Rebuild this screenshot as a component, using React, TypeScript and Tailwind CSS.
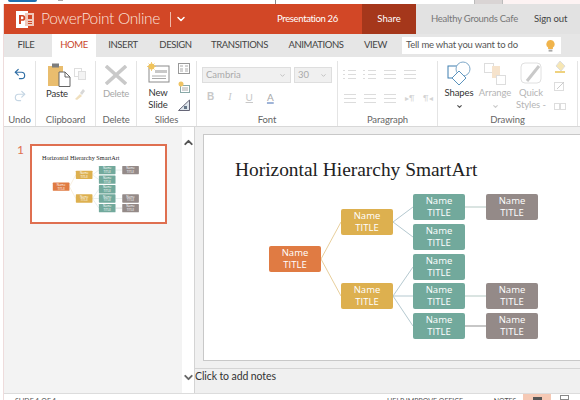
import { ChevronDown, ChevronUp, Redo2, Undo2 } from "lucide-react";

const nodes = [
  { x: 65, y: 111, c: "bg-[#e07b43]" },
  { x: 137, y: 74, c: "bg-[#ddb04f]" },
  { x: 137, y: 148, c: "bg-[#ddb04f]" },
  { x: 209, y: 59, c: "bg-[#72a99c]" },
  { x: 209, y: 89, c: "bg-[#72a99c]" },
  { x: 209, y: 119, c: "bg-[#72a99c]" },
  { x: 209, y: 148, c: "bg-[#72a99c]" },
  { x: 209, y: 178, c: "bg-[#72a99c]" },
  { x: 282, y: 59, c: "bg-[#948a88]" },
  { x: 282, y: 148, c: "bg-[#948a88]" },
  { x: 282, y: 178, c: "bg-[#948a88]" },
];

const lines = [
  [117, 124, 137, 87, "#e8cf9c"],
  [117, 124, 137, 161, "#e8cf9c"],
  [189, 87, 209, 72, "#b5c9d0"],
  [189, 87, 209, 102, "#b5c9d0"],
  [189, 161, 209, 132, "#b5c9d0"],
  [189, 161, 209, 161, "#b5c9d0"],
  [189, 161, 209, 191, "#b5c9d0"],
  [261, 72, 282, 72, "#b5c9c4"],
  [261, 161, 282, 161, "#b5c9c4"],
  [261, 191, 282, 191, "#8f8f8f"],
] as const;

const Slide = () => (
  <div className="relative w-[415px] h-[226px] bg-white">
    <h1 className="absolute left-[31px] top-[23px] text-[19.4px] leading-6 whitespace-nowrap text-[#222] font-['Liberation_Serif',serif]">
      Horizontal Hierarchy SmartArt
    </h1>
    <svg className="absolute inset-0" width="415" height="226">
      {lines.map(([x1, y1, x2, y2, stroke], i) => (
        <line key={i} x1={x1} y1={y1} x2={x2} y2={y2} stroke={stroke} strokeWidth="1" />
      ))}
    </svg>
    {nodes.map((n, i) => (
      <div
        key={i}
        className={`absolute w-[52px] h-[26px] rounded-[2px] flex flex-col items-center justify-center text-white text-[9.5px] leading-[12px] font-['Open_Sans',sans-serif] ${n.c}`}
        style={{ left: n.x, top: n.y }}
      >
        <span>Name</span>
        <span>TITLE</span>
      </div>
    ))}
  </div>
);

const Tab = ({ label, active, className }: { label: string; active?: boolean; className: string }) => (
  <div
    className={`h-full flex items-center justify-center text-[9.5px] tracking-[-0.4px] ${className} ${
      active ? "bg-white text-[#c8452a]" : "text-[#444]"
    }`}
  >
    {label}
  </div>
);

const Group = ({ label, className, children }: { label: string; className: string; children: React.ReactNode }) => (
  <div className={`h-full flex flex-col border-r border-[#e4e4e4] ${className}`}>
    <div className="flex-1 min-h-0">{children}</div>
    <div className="h-[13px] pt-px text-center text-[9.5px] tracking-[-0.1px] leading-[12px] text-[#666]">{label}</div>
  </div>
);

const Lines = ({ w = 14, color = "#dcdcdc", dotted }: { w?: number; color?: string; dotted?: boolean }) => (
  <svg width={w} height="11" viewBox="0 0 14 11" stroke={color} strokeWidth="1">
    {[1.5, 5.5, 9.5].map((y) => (
      <g key={y}>
        {dotted && <line x1="0" y1={y} x2="2" y2={y} />}
        <line x1={dotted ? 5 : 1} y1={y} x2="13" y2={y} />
      </g>
    ))}
  </svg>
);

const Glyph = ({ children, w = 14, h = 14 }: { children: React.ReactNode; w?: number; h?: number }) => (
  <svg width={w} height={h} viewBox={`0 0 ${w} ${h}`} fill="none">
    {children}
  </svg>
);

export default function App() {
  return (
    <div className="w-[580px] h-[400px] overflow-hidden flex flex-col bg-white font-['Lato',sans-serif]">
      {/* browser edge above the app */}
      <div className="h-1 flex items-start bg-[#fff]">
        <div className="ml-2 w-[29px] h-[2px] rounded-b bg-[#1e6fb0]" />
        <div className="ml-[21px] w-[5px] h-[1px] bg-[#aaa]" />
        <div className="ml-[212px] w-px h-1 bg-[#888]" />
        <div className="ml-[198px] w-[29px] h-1 bg-[#d9d4d4] border-x border-[#bbb]" />
        <div className="flex-1 h-1 bg-[#fdf3f3]" />
      </div>

      <div className="flex-1 min-h-0 flex flex-col ml-[3px] border-l border-[#eedcdc]">
        {/* Title bar */}
        <div className="h-[30px] flex items-center shrink-0 bg-[#e2e2e2]">
          <div className="w-[358px] h-full flex items-center bg-[#d24726] text-white">
            <svg className="ml-3" width="19" height="19" viewBox="0 0 19 19">
              <rect x="0" y="1" width="12" height="17" fill="#fff" />
              <rect x="9" y="3" width="9" height="13" fill="#f0c9bb" />
              <rect x="12" y="5" width="4" height="4" fill="#d24726" />
              <rect x="12" y="11" width="4" height="1" fill="#d24726" />
              <rect x="12" y="13" width="4" height="1" fill="#d24726" />
              <path d="M3 14V5h3.4a2.9 2.9 0 0 1 0 5.8H5V14z M5 6.6v2.6h1.2a1.3 1.3 0 0 0 0-2.6z" fill="#d24726" fillRule="evenodd" />
            </svg>
            <span className="ml-[6px] w-[120px] text-[15.5px] tracking-[-0.35px] font-light whitespace-nowrap text-[#fbe3db]">PowerPoint Online</span>
            <div className="ml-[9px] w-px h-[15px] bg-[#f0b9a8]" />
            <ChevronDown size={12} strokeWidth={3} className="ml-[4px]" />
            <span className="ml-[90px] text-[9.5px] tracking-[-0.35px] whitespace-nowrap">Presentation 26</span>
          </div>
          <div className="w-[54px] h-full flex items-center justify-center text-[9.5px] bg-[#a5371b] text-white">Share</div>
          <span className="ml-[15px] w-[87px] whitespace-nowrap text-[#777] text-[9.5px] tracking-[-0.25px]">Healthy Grounds Cafe</span>
          <span className="ml-[16px] whitespace-nowrap text-[#444] text-[9.5px] tracking-[-0.1px]">Sign out</span>
        </div>

        {/* Tabs */}
        <div className="h-[23px] shrink-0 flex items-center bg-[#e6e6e6]">
          <Tab label="FILE" className="w-[48px] pr-1" />
          <Tab label="HOME" active className="w-[44px]" />
          <Tab label="INSERT" className="w-[54px]" />
          <Tab label="DESIGN" className="w-[51px]" />
          <Tab label="TRANSITIONS" className="w-[77px]" />
          <Tab label="ANIMATIONS" className="w-[76px]" />
          <Tab label="VIEW" className="w-[43px]" />
          <div className="ml-[5px] w-[159px] h-[17px] flex items-center justify-between pl-1 pr-[6px] bg-white text-[9.5px] tracking-[-0.2px] text-[#555] whitespace-nowrap">
            Tell me what you want to do
            <svg width="9" height="12" viewBox="0 0 9 12">
              <path d="M4.5 0a4.2 4.2 0 0 1 2.4 7.6V9H2.1V7.6A4.2 4.2 0 0 1 4.5 0z" fill="#f0b44c" />
              <rect x="2.6" y="9.6" width="3.8" height="2" fill="#a8a8a8" />
            </svg>
          </div>
        </div>

        {/* Ribbon */}
        <div className="h-[70px] shrink-0 flex border-b border-[#d8d8d8] pt-1 pb-0">
          <Group label="Undo" className="w-[32px]">
            <div className="flex flex-col items-center gap-2 pt-[6px]">
              <Undo2 size={14} strokeWidth={2} className="text-[#2f6ea5]" />
              <Redo2 size={14} strokeWidth={2} className="text-[#c5d6e4]" />
            </div>
          </Group>

          <Group label="Clipboard" className="w-[60px]">
            <div className="flex pl-[11px] pt-[2px]">
              <div className="flex flex-col items-center w-[24px]">
                <svg width="23" height="24" viewBox="0 0 23 24">
                  <path d="M0 3h15v20H0z" fill="#e9bd6e" />
                  <rect x="4" y="0.5" width="7" height="4" fill="#7d7d7d" />
                  <path d="M11 9h6l5 5v9.500H11z" fill="#fff" stroke="#666" />
                  <path d="M17 9v5h5" fill="none" stroke="#666" />
                </svg>
                <span className="-ml-1 text-[9.5px] tracking-[-0.2px] leading-3 mt-[1px] text-[#333]">Paste</span>
              </div>
              <div className="ml-[2px] flex flex-col gap-[8px] pt-[5px] pl-[1px]">
                <Glyph w={12} h={12}>
                  <rect x="0.500" y="0.500" width="7" height="8" stroke="#dedede" />
                  <rect x="4.500" y="3.500" width="7" height="8" stroke="#dedede" fill="#f3f3f3" />
                </Glyph>
                <Glyph w={12} h={12}>
                  <path d="M1 11l5-5 2 2-5 4z" fill="#f0dfbd" />
                  <path d="M6 5l3-4 2 2-3 4z" fill="#d8d8d8" />
                </Glyph>
              </div>
            </div>
          </Group>

          <Group label="Delete" className="w-[41px]">
            <div className="flex flex-col items-center pt-1">
              <svg width="22" height="20" viewBox="0 0 22 20">
                <path d="M1 1l20 18M21 1L1 19" stroke="#c9c9c9" strokeWidth="3.500" />
              </svg>
              <span className="text-[9.5px] tracking-[-0.3px] leading-3 mt-[3px] text-[#a8a8a8]">Delete</span>
            </div>
          </Group>

          <Group label="Slides" className="w-[60px]">
            <div className="flex pl-[8px]">
              <div className="flex flex-col items-center w-[26px]">
                <svg className="mt-px" width="23" height="21" viewBox="0 0 23 21">
                  <rect x="2" y="4" width="20" height="16" fill="#fff" stroke="#8c8c8c" />
                  <rect x="8" y="8" width="12" height="3" fill="#c8c8c8" />
                  <path d="M5 14h14M5 16.500h14" stroke="#aaa" />
                  <circle cx="4.500" cy="4.500" r="3" fill="#f0c35a" />
                  <path d="M4.500 0v9M0 4.500h9M1.500 1.500l6 6M7.500 1.500l-6 6" stroke="#f0c35a" strokeWidth="0.800" />
                </svg>
                <span className="text-[9.5px] tracking-[-0.1px] leading-[12px] mt-1 text-[#333] text-center">New Slide</span>
              </div>
              <div className="ml-[7px] flex flex-col gap-[6px] pt-[2px]">
                <Glyph w={12} h={12}>
                  <rect x="0.500" y="0.500" width="11" height="10" stroke="#999" />
                  <path d="M2 3h3M2 6h3M2 8h3M7 3h3M7 6h3M7 8h3" stroke="#aaa" />
                </Glyph>
                <Glyph w={12} h={12}>
                  <rect x="2.500" y="4.500" width="9" height="7" stroke="#8aa9a8" />
                  <path d="M4 7h6M4 9h6" stroke="#aaa" />
                  <circle cx="3" cy="3" r="2.500" fill="#efc464" />
                </Glyph>
                <Glyph w={12} h={12}>
                  <path d="M0.500 11.500L11.500 1v10.500z" stroke="#667" fill="#dfe6ec" />
                  <rect x="6" y="7" width="3" height="3" fill="#678" />
                </Glyph>
              </div>
            </div>
          </Group>

          <Group label="Font" className="w-[141px]">
            <div className="pl-[5px] pt-[6px]">
              <div className="flex gap-[3px]">
                <div className="w-[89px] h-[16px] flex items-center justify-between pl-[3px] pr-1 bg-[#f0f0f0] border border-[#dedede] text-[9.5px] text-[#aaa]">
                  Cambria
                  <ChevronDown size={7} strokeWidth={3} className="text-[#bbb]" />
                </div>
                <div className="w-[38px] h-[16px] flex items-center justify-between pl-[3px] pr-1 bg-[#f0f0f0] border border-[#dedede] text-[9.5px] text-[#aaa]">
                  30
                  <ChevronDown size={7} strokeWidth={3} className="text-[#bbb]" />
                </div>
              </div>
              <div className="flex items-center gap-[14px] pl-[5px] mt-[8px] text-[10px] leading-3 text-[#c8c8c8]">
                <span className="font-bold font-['Liberation_Sans',sans-serif]">B</span>
                <span className="italic font-['Liberation_Serif',serif]">I</span>
                <span className="underline">U</span>
                <span className="text-[#a8a8a8] underline decoration-[#9fb4d8] decoration-2">A</span>
              </div>
            </div>
          </Group>

          <Group label="Paragraph" className="w-[100px]">
            <div className="pl-[5px] pt-[8px] flex flex-col gap-[13px]">
              <div className="flex gap-[6px]">
                <Lines dotted />
                <Lines dotted />
                <Lines />
                <Lines />
              </div>
              <div className="flex items-center gap-[6px]">
                <Lines />
                <Lines />
                <Lines />
                <span className="ml-[2px] w-[12px] text-[8px] leading-[11px] text-[#d4d4d4]">▸¶</span>
                <span className="w-[12px] text-[8px] leading-[11px] text-[#d4d4d4]">¶◂</span>
              </div>
            </div>
          </Group>

          <Group label="Drawing" className="w-[140px]">
            <div className="flex pl-[3px]">
              <div className="flex flex-col items-center w-[36px]">
                <svg width="24" height="25" viewBox="0 0 24 25" fill="none">
                  <rect x="1" y="5" width="12" height="12" stroke="#3f7fb0" />
                  <circle cx="16" cy="8" r="7" stroke="#7fa9c9" fill="#fff" />
                  <path d="M12 10l7 7-7 7-7-7z" stroke="#5b93bd" fill="#fff" />
                </svg>
                <span className="text-[9.5px] tracking-[-0.1px] leading-3 mt-[1px] text-[#333]">Shapes</span>
                <ChevronDown size={7} strokeWidth={4} className="mt-1 text-[#555]" />
              </div>
              <div className="flex flex-col items-center w-[36px]">
                <svg width="22" height="24" viewBox="0 0 22 24" fill="none">
                  <rect x="0.500" y="2.500" width="9" height="9" stroke="#ddd" />
                  <rect x="8" y="5" width="8" height="12" fill="#f6e3cc" />
                  <rect x="12.500" y="14.500" width="9" height="9" stroke="#ddd" fill="#fff" />
                </svg>
                <span className="text-[9.5px] tracking-[-0.1px] leading-3 mt-[2px] text-[#b5b5b5]">Arrange</span>
                <ChevronDown size={7} strokeWidth={4} className="mt-1 text-[#ccc]" />
              </div>
              <div className="flex flex-col items-center w-[36px]">
                <svg width="22" height="24" viewBox="0 0 22 24" fill="none">
                  <rect x="1" y="2" width="20" height="20" rx="4" stroke="#e0e0e0" />
                  <path d="M19 5L7 20" stroke="#c9c9c9" strokeWidth="3" />
                </svg>
                <span className="text-[9.5px] tracking-[-0.1px] leading-3 mt-[2px] text-[#b5b5b5]">Quick</span>
                <span className="text-[9.5px] tracking-[-0.1px] leading-3 text-[#b5b5b5] whitespace-nowrap">Styles -</span>
              </div>
              <div className="ml-[5px] flex flex-col gap-[7px]">
                <Glyph w={12} h={12}>
                  <path d="M6 0l5 5-4 5-5-5z" fill="#f6e6b4" stroke="#ddd" />
                  <rect x="1" y="10" width="10" height="2" fill="#efd27f" />
                </Glyph>
                <Glyph w={12} h={12}>
                  <rect x="0.500" y="2.500" width="9" height="8" stroke="#ddd" />
                  <path d="M3 9l7-7" stroke="#ccc" />
                </Glyph>
                <Glyph w={12} h={12}>
                  <rect x="0.500" y="4.500" width="5" height="6" stroke="#ddd" />
                  <rect x="6.500" y="4.500" width="5" height="6" stroke="#ddd" />
                </Glyph>
              </div>
            </div>
          </Group>
        </div>

        {/* Slide panel and editor */}
        <div className="flex-1 min-h-0 flex">
          <div className="w-[178px] shrink-0 flex items-start gap-[7px] pl-[13px] pt-[17px] bg-[#f3f3f3]">
            <span className="text-[12px] leading-[12px] text-[#e07050] w-[6px]">1</span>
            <div className="w-[137px] h-[80px] overflow-hidden border-[2.5px] border-[#df6f50] bg-white pt-px">
              <div className="origin-top-left scale-[0.32]">
                <Slide />
              </div>
            </div>
          </div>
          <div className="w-[12px] shrink-0 flex flex-col items-center justify-between pt-[9px] pb-[9px] border-r border-[#d4d4d4] box-content bg-white">
            <ChevronUp size={13} strokeWidth={3.500} className="text-[#555]" />
            <ChevronDown size={13} strokeWidth={3.500} className="text-[#666]" />
          </div>
          <div className="flex-1 min-w-0 flex flex-col bg-[#f0f0f0]">
            <div className="flex-1 min-h-0 overflow-hidden pt-[7px] pl-2 border-b border-[#d4d4d4]">
              <div className="w-[415px] h-[227px] overflow-hidden border border-[#c8c8c8] bg-white">
                <Slide />
              </div>
            </div>
            <div className="h-[24px] shrink-0 flex items-center pb-2 text-[10.5px] tracking-[-0.1px] text-[#333]">Click to add notes</div>
          </div>
        </div>

        {/* Status bar */}
        <div className="h-[7px] shrink-0 flex items-start overflow-hidden border-t border-[#dcdcdc] bg-white text-[7px] leading-[10px] text-[#555] whitespace-nowrap">
          <span className="w-[383px] pl-[11px] mt-[2px]">SLIDE 1 OF 1</span>
          <span className="w-[98px] mt-[2px]">HELP IMPROVE OFFICE</span>
          <span className="w-[38px] mt-[2px]">▲ NOTES</span>
          <div className="w-[28px] h-[7px] flex justify-center bg-[#f5c9b5] pt-[3px]">
            <div className="w-[9px] h-1 bg-[#555]" />
          </div>
          <div className="ml-[9px] mt-[1px] w-[9px] h-[5px] border border-[#888]" />
        </div>
      </div>
    </div>
  );
}
